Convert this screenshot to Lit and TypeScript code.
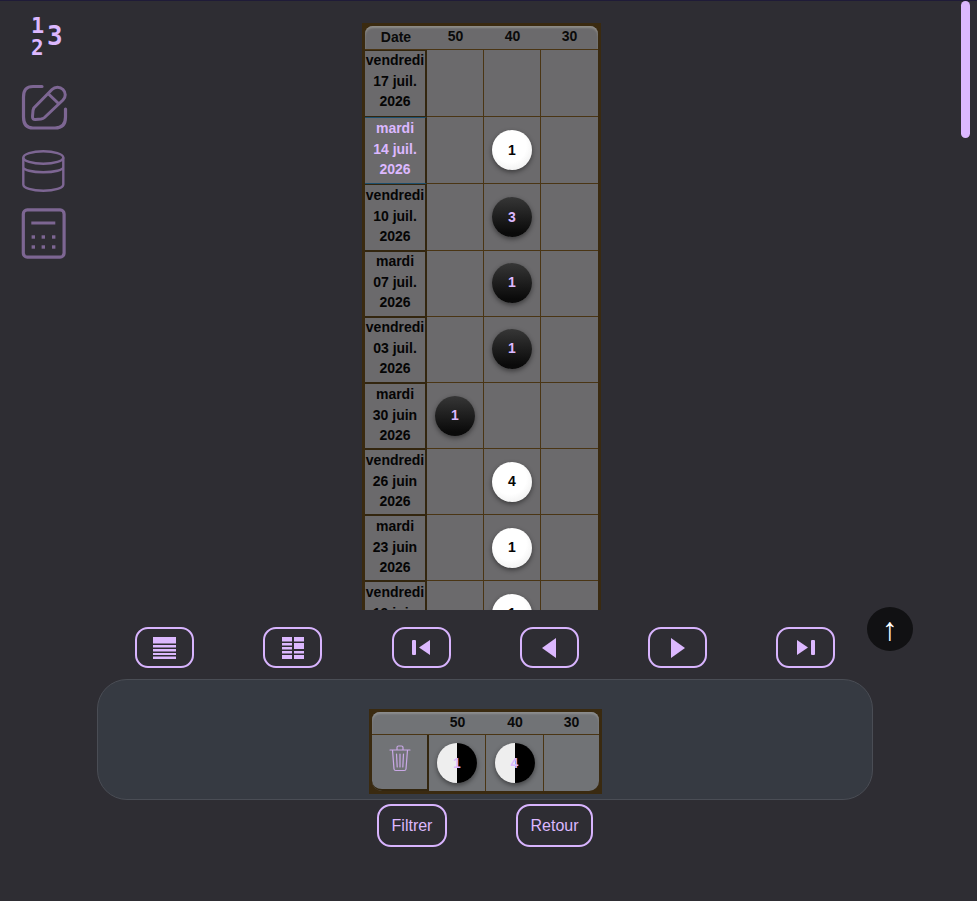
import { LitElement, html, css, svg } from "lit";
import { customElement } from "lit/decorators.js";

type Row = { d: string[]; sel?: boolean; col?: number; n?: string; light?: boolean; tall?: boolean; hi?: boolean };
const rows: Row[] = [
  { d: ["vendredi", "17 juil.", "2026"], tall: true, hi: true },
  { d: ["mardi", "14 juil.", "2026"], sel: true, col: 1, n: "1", light: true, tall: true },
  { d: ["vendredi", "10 juil.", "2026"], col: 1, n: "3", tall: true },
  { d: ["mardi", "07 juil.", "2026"], col: 1, n: "1", hi: true },
  { d: ["vendredi", "03 juil.", "2026"], col: 1, n: "1", hi: true },
  { d: ["mardi", "30 juin", "2026"], col: 0, n: "1" },
  { d: ["vendredi", "26 juin", "2026"], col: 1, n: "4", light: true },
  { d: ["mardi", "23 juin", "2026"], col: 1, n: "1", light: true },
  { d: ["vendredi", "19 juin", "2026"], col: 1, n: "1", light: true },
];

const ico = (inner: unknown, w = 60, h = 60) =>
  html`<svg class="ico" width=${w} height=${h} viewBox="0 0 ${w} ${h}" fill="none">${inner}</svg>`;

@customElement("app-root")
export class AppRoot extends LitElement {
  static styles = css`
    :host { display: block; width: 977px; height: 901px; position: relative; overflow: hidden; background: #2e2d33; font-family: "Liberation Sans", Arial, sans-serif; border-top: 1px solid #1f1b38; box-sizing: border-box; }
    .top { display: flex; height: 609px; }
    .side { width: 362px; display: flex; flex-direction: column; padding-left: 16px; box-sizing: border-box; }
    .ico { display: block; flex: none; }
    .i123 { height: 64px; margin-top: 4px; }
    .iedit { margin-top: 9px; height: 60px; }
    .idb { margin-top: 4px; height: 60px; }
    .icalc { margin-top: 3px; height: 60px; }
    .i123 text { font-family: "DejaVu Sans Mono", monospace; font-weight: 700; fill: #dcb8ff; }
    .scroll { margin-top: 22px; height: 587px; width: 239px; overflow: hidden; box-sizing: border-box; border: 3px solid #3a2a10; border-bottom: 0; background: #3a2a10; }
    .mini { width: 233px; box-sizing: border-box; border: 3px solid #3a2a10; background: #3a2a10; }
    .thead { display: grid; grid-template-columns: 62px 57px 57px 57px; height: 24px; background: #6b6a6c; border-radius: 8px 8px 0 0; box-shadow: inset 0 2px 2px #8f8d88; border-bottom: 1px solid #4a3514; box-sizing: border-box; font-weight: 700; font-size: 14px; color: #0a0a0a; }
    .mini .thead { grid-template-columns: 57px 57px 58px 55px; height: 23px; background: #717376; box-shadow: inset 0 2px 2px #8c8d8e; }
    .thead span { text-align: center; line-height: 20px; }
    .thead .dt { line-height: 23px; }
    .row { display: grid; grid-template-columns: 62px 57px 57px 57px; height: 66px; background: #6b6a6c; box-sizing: border-box; border-bottom: 1px solid #4a3514; }
    .row.tall { height: 67px; }
    .date { border: 1px solid #33260f; border-left-width: 0; border-right-width: 2px; margin-bottom: -1px; text-align: center; font-weight: 700; font-size: 14px; line-height: 20.5px; color: #050505; display: flex; flex-direction: column; justify-content: flex-start; white-space: nowrap; box-sizing: border-box; }
    .row.hi .date > div:first-child { margin-top: -0.6px; }
    .row.hi .cell { padding-bottom: 2px; }
    .date.sel { color: #dcb8ff; border-top: 1px solid #1d4f6e; border-bottom: 1px solid #1d4f6e; }
    .cell { border-right: 1px solid #4a3514; display: flex; align-items: center; justify-content: center; box-sizing: border-box; }
    .cell:last-child { border-right: 0; }
    .ball { width: 40px; height: 40px; border-radius: 50%; display: flex; align-items: center; justify-content: center; font-weight: 700; font-size: 14px; box-sizing: border-box; padding-bottom: 1px; box-shadow: 0 2px 5px rgba(0,0,0,.45); }
    .ball.dark { background: linear-gradient(180deg, #363636, #0a0a0a 90%); color: #dcb8ff; }
    .ball.light { background: radial-gradient(circle at 45% 40%, #fff 50%, #e6e6e6 100%); color: #050505; }
    .ball.half { background: linear-gradient(90deg, #eeeeee 50%, #000 50%); color: #dcb8ff; }
    .nav { display: flex; gap: 69.3px; padding: 17px 0 0 135px; }
    .btn { box-sizing: border-box; border: 2px solid #d8b4fe; border-radius: 13px; background: transparent; color: #dcb8ff; display: flex; align-items: center; justify-content: center; font: 16px "Liberation Sans", Arial, sans-serif; padding: 0; }
    .nav .btn { width: 59px; height: 41px; }
    .panel { margin: 11px 0 0 97px; width: 776px; height: 121px; box-sizing: border-box; border: 1px solid #4a4d55; border-radius: 30px; background: #363a42; padding: 29px 0 0 271px; }
    .mrow { display: grid; grid-template-columns: 57px 57px 58px 55px; height: 56px; background: #717376; border-radius: 0 0 10px 10px; }
    .mrow .cell:first-child { border-right: 2px solid #33260f; border-bottom: 2px solid #33260f; border-radius: 0 0 0 10px; padding-bottom: 8px; }
    .acts { display: flex; margin: 4px 0 0 377px; }
    .acts .btn { height: 43px; border-radius: 14px; }
    .f { width: 70px; margin-right: 69px; }
    .r { width: 77px; }
    .up { position: absolute; left: 867px; top: 606px; width: 46px; height: 44px; border-radius: 50%; background: #111113; color: #fff; display: flex; align-items: center; justify-content: center; font: 32px "Liberation Sans", sans-serif; line-height: 44px; }
    .thumb { position: absolute; left: 961px; top: 0; width: 9px; height: 137px; border-radius: 5px; background: #dcb8ff; }
  `;

  private ballT(r: Row) {
    return html`<div class="ball ${r.light ? "light" : "dark"}">${r.n}</div>`;
  }

  render() {
    const lil = "#7d6693";
    return html`
      <div class="top">
        <div class="side">
          ${html`<div class="i123">${ico(svg`
            <text x="15" y="28" font-size="22">1</text>
            <text x="31" y="40" font-size="26">3</text>
            <text x="15" y="50" font-size="21">2</text>`)}</div>`}
          <div class="iedit">${ico(svg`
            <path d="M26 8.5H17C10 8.5 7.5 12 7.5 19V39C7.5 46 10 50 17 50H39C46 50 49.5 46 49.5 39V31" stroke=${lil} stroke-width="3.2" stroke-linecap="round"/>
            <path d="M17.8 30L36 11.5C39 8.5 44 8.5 47 11.5C50 14.5 50 19 47 22L28.5 39.5C27.5 40.4 26.5 40.8 25 41L19.5 41.5C17.5 41.7 16.3 40.5 16.5 38.5L17 32.5ZM32 15.5L43 26" stroke=${lil} stroke-width="3" stroke-linejoin="round"/>`)}</div>
          <div class="idb">${ico(svg`
            <ellipse cx="27.3" cy="15.5" rx="20" ry="6.3" stroke=${lil} stroke-width="2.4"/>
            <path d="M7.3 15.5V42.5C7.3 46 16 48.8 27.3 48.8S47.3 46 47.3 42.5V15.5M7.3 25C7.3 28 16 30.3 27.3 30.3S47.3 28 47.3 25" stroke=${lil} stroke-width="2.4"/>`)}</div>
          <div class="icalc">${ico(svg`
            <rect x="7.3" y="4.9" width="40.8" height="47.2" rx="4" stroke=${lil} stroke-width="3.2"/>
            <path d="M15.3 18H39.3" stroke=${lil} stroke-width="3"/>
            ${[30.3, 40.3].map((y) => [15.6, 25.6, 36].map((x) => svg`<rect x=${x} y=${y} width="3.4" height="3.4" fill=${lil}/>`))}`)}</div>
        </div>
        <div class="scroll">
          <div class="thead"><span class="dt">Date</span><span>50</span><span>40</span><span>30</span></div>
          ${rows.map((r) => html`
            <div class="row ${r.tall ? "tall" : ""} ${r.hi ? "hi" : ""}">
              <div class="date ${r.sel ? "sel" : ""}">${r.d.map((t) => html`<div>${t}</div>`)}</div>
              ${[0, 1, 2].map((c) => html`<div class="cell">${r.col === c ? this.ballT(r) : ""}</div>`)}
            </div>`)}
        </div>
      </div>
      <div class="nav">
        <button class="btn">${ico(svg`
          <path d="M0 0H23V6.5H0ZM0 8H23V10.5H0ZM0 12H23V14.5H0ZM0 16H23V18H0ZM0 19.5H23V22H0Z" fill="#dcb8ff"/>`, 23, 22)}</button>
        <button class="btn">${ico(svg`
          <path d="M0 0H10V4.5H0ZM12 0H22V4.5H12ZM0 6H10V8.5H0ZM12 6H22V12H12ZM0 10H10V12.5H0ZM0 14H10V16.5H0ZM12 14H22V16.5H12ZM0 18H10V22H0ZM12 18H22V22H12Z" fill="#dcb8ff"/>`, 22, 22)}</button>
        <button class="btn">${ico(svg`
          <rect x="0" y="0" width="4" height="15" rx="1" fill="#dcb8ff"/><path d="M18 0V15L7 7.5Z" fill="#dcb8ff"/>`, 18, 15)}</button>
        <button class="btn">${ico(svg`<path d="M14 0V20L0 10Z" fill="#dcb8ff"/>`, 14, 20)}</button>
        <button class="btn">${ico(svg`<path d="M0 0V20L14 10Z" fill="#dcb8ff"/>`, 14, 20)}</button>
        <button class="btn">${ico(svg`
          <rect x="14" y="0" width="4" height="15" rx="1" fill="#dcb8ff"/><path d="M0 0V15L11 7.5Z" fill="#dcb8ff"/>`, 18, 15)}</button>
      </div>
      <div class="panel">
        <div class="mini">
          <div class="thead"><span></span><span>50</span><span>40</span><span>30</span></div>
          <div class="mrow">
            <div class="cell">${ico(svg`
              <path d="M1 5H21M8 5V2.5C8 1.7 8.7 1 9.5 1H12.5C13.3 1 14 1.7 14 2.5V5M3.5 5L5 24C5.1 25 5.8 25.5 6.8 25.5H15.2C16.2 25.5 16.9 25 17 24L18.5 5M7.5 9L8.2 22M11 9V22M14.5 9L13.8 22" stroke="#c9a8e6" stroke-width="1.2" stroke-linecap="round" stroke-linejoin="round"/>`, 22, 27)}</div>
            <div class="cell"><div class="ball half">1</div></div>
            <div class="cell"><div class="ball half">4</div></div>
            <div class="cell"></div>
          </div>
        </div>
      </div>
      <div class="acts">
        <button class="btn f">Filtrer</button>
        <button class="btn r">Retour</button>
      </div>
      <div class="up">↑</div>
      <div class="thumb"></div>
    `;
  }
}
